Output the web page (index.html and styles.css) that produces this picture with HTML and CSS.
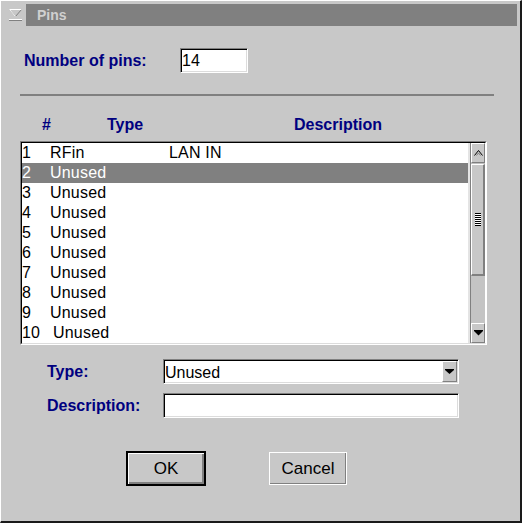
FILE: index.html
```html
<!DOCTYPE html>
<html>
<head>
<meta charset="utf-8">
<link rel="stylesheet" href="styles.css">
</head>
<body>
<div class="window">
  <div class="titlerow">
    <div class="menu-btn">
      <svg width="13" height="12" viewBox="0 0 13 12">
        <polygon points="0.5,0.5 12.5,0.5 6.5,7.5" fill="none" stroke="#808080" stroke-width="1"/>
        <polyline points="0.5,0.5 12.5,0.5" stroke="#ffffff" stroke-width="1" fill="none"/>
        <polyline points="0.5,0.5 6.5,7.5" stroke="#ffffff" stroke-width="1" fill="none"/>
        <rect x="0" y="10" width="13" height="1" fill="#ffffff"/>
        <rect x="0" y="11" width="13" height="1" fill="#808080"/>
      </svg>
    </div>
    <div class="titlebar">Pins</div>
  </div>

  <div class="content">
    <div class="num-row">
      <span class="label num-label">Number of pins:</span>
      <div class="textbox num-box">14</div>
    </div>

    <div class="separator"></div>

    <div class="headers">
      <span class="label">#</span>
      <span class="label">Type</span>
      <span class="label">Description</span>
    </div>

    <div class="listbox">
      <div class="listbox-inner">
        <div class="rows">
          <div class="row"><span class="num">1</span><span class="type">RFin</span><span class="desc">LAN IN</span></div>
          <div class="row selected"><span class="num">2</span><span class="type">Unused</span></div>
          <div class="row"><span class="num">3</span><span class="type">Unused</span></div>
          <div class="row"><span class="num">4</span><span class="type">Unused</span></div>
          <div class="row"><span class="num">5</span><span class="type">Unused</span></div>
          <div class="row"><span class="num">6</span><span class="type">Unused</span></div>
          <div class="row"><span class="num">7</span><span class="type">Unused</span></div>
          <div class="row"><span class="num">8</span><span class="type">Unused</span></div>
          <div class="row"><span class="num">9</span><span class="type">Unused</span></div>
          <div class="row"><span class="num wide">10</span><span class="type">Unused</span></div>
        </div>
        <div class="gutter"></div>
        <div class="scrollbar">
          <div class="sb-btn sb-up">
            <svg width="9" height="6" viewBox="0 0 9 6">
              <polyline points="0.5,5.5 4.5,0.5 8.5,5.5" fill="none" stroke="#000" stroke-width="1"/>
              <polyline points="2.5,5.5 4.5,3 6.5,5.5" fill="none" stroke="#808080" stroke-width="1"/>
            </svg>
          </div>
          <div class="sb-thumb"><div class="grip"></div></div>
          <div class="sb-trough"></div>
          <div class="sb-btn sb-down">
            <svg width="9" height="6" viewBox="0 0 9 6">
              <rect x="0" y="0" width="9" height="1" fill="#000"/>
              <polygon points="0,1 9,1 4.5,5.5" fill="#000"/>
            </svg>
          </div>
        </div>
      </div>
    </div>

    <div class="form-row type-row">
      <span class="label form-label">Type:</span>
      <div class="combo">
        <span class="combo-text">Unused</span>
        <div class="combo-btn">
          <svg width="9" height="5" viewBox="0 0 9 5">
            <rect x="0" y="0" width="9" height="1" fill="#000"/>
            <polygon points="0,1 9,1 4.5,5" fill="#000"/>
          </svg>
        </div>
      </div>
    </div>

    <div class="form-row desc-row">
      <span class="label form-label">Description:</span>
      <div class="textbox desc-box"></div>
    </div>

    <div class="buttons">
      <div class="btn btn-default">OK</div>
      <div class="btn btn-plain">Cancel</div>
    </div>
  </div>
</div>
</body>
</html>
```

FILE: styles.css
```css
html, body {
  margin: 0;
  padding: 0;
  background: #c8c8c8;
}

.window {
  width: 522px;
  height: 523px;
  box-sizing: border-box;
  background: #c8c8c8;
  border-top: 1px solid #ffffff;
  border-left: 1px solid #ffffff;
  border-right: 2px solid #1a1a1a;
  border-bottom: 2px solid #1a1a1a;
  font-family: "Liberation Sans", Arial, sans-serif;
  overflow: hidden;
}

/* title */
.titlerow {
  display: flex;
  height: 22px;
  margin-top: 3px;
}

.menu-btn {
  width: 25px;
  display: flex;
  align-items: center;
  padding-left: 8px;
  box-sizing: border-box;
}

.menu-btn svg {
  display: block;
}

.titlebar {
  flex: 1;
  margin-right: 3px;
  background: #808080;
  color: #d0d0d0;
  font-weight: bold;
  font-size: 14px;
  line-height: 22px;
  padding-left: 11px;
}

.content {
  padding-left: 19px;
}

.label {
  color: #000080;
  font-weight: bold;
  font-size: 16px;
  line-height: 18px;
}

/* number of pins */
.num-row {
  display: flex;
  align-items: center;
  margin-top: 22px;
  padding-left: 4px;
  height: 25px;
}

.num-label {
  width: 156px;
}

.textbox {
  box-sizing: border-box;
  height: 25px;
  background: #ffffff;
  border: 1px solid;
  border-color: #808080 #ffffff #ffffff #808080;
  box-shadow: inset 1px 1px 0 #000000, inset -1px -1px 0 #dcdcdc;
  font-size: 16px;
  line-height: 23px;
  padding-left: 1px;
  color: #000;
}

.num-box {
  width: 68px;
}

.desc-box {
  width: 296px;
}

.separator {
  margin-top: 21px;
  width: 474px;
  height: 2px;
  background: #808080;
}

/* headers */
.headers {
  margin-top: 20px;
  display: grid;
  grid-template-columns: 65px 187px auto;
  padding-left: 22px;
  height: 18px;
}

/* listbox */
.listbox {
  margin-top: 7px;
  width: 467px;
  height: 204px;
  box-sizing: border-box;
  border: 1px solid;
  border-color: #808080 #ffffff #ffffff #808080;
}

.listbox-inner {
  height: 202px;
  box-sizing: border-box;
  border: 1px solid;
  border-color: #000000 #ffffff #dcdcdc #000000;
  display: flex;
}

.rows {
  width: 446px;
  height: 200px;
  background: #ffffff;
  overflow: hidden;
}

.gutter {
  width: 2px;
  background: #e4e4e4;
}

.row {
  display: flex;
  height: 20px;
  line-height: 20px;
  font-size: 16px;
  color: #000;
  letter-spacing: 0.2px;
  white-space: nowrap;
}

.row.selected {
  background: #808080;
  color: #ffffff;
}

.num {
  width: 28px;
}

.num.wide {
  width: 31px;
}

.type {
  width: 119px;
}

/* scrollbar */
.scrollbar {
  width: 15px;
  box-sizing: border-box;
  border-left: 1px solid #808080;
  background: #c0c0c0;
  display: flex;
  flex-direction: column;
}

.sb-btn {
  height: 20px;
  box-sizing: border-box;
  background: #c8c8c8;
  border: 1px solid;
  border-color: #ffffff #808080 #808080 #ffffff;
  display: flex;
  align-items: center;
  justify-content: center;
}

.sb-btn svg {
  display: block;
}

.sb-up {
  margin-bottom: 1px;
}

.sb-thumb {
  height: 112px;
  box-sizing: border-box;
  background: #c8c8c8;
  border-top: 1px solid #ffffff;
  border-left: 1px solid #ffffff;
  border-right: 2px solid #808080;
  border-bottom: 2px solid #808080;
  display: flex;
  align-items: center;
  justify-content: center;
}

.grip {
  width: 6px;
  height: 13px;
  background: repeating-linear-gradient(to bottom, #000000 0 1px, #ffffff 1px 2px);
}

.sb-trough {
  height: 47px;
  background: #c4c4c4;
}

/* form rows */
.form-row {
  display: flex;
  align-items: center;
  padding-left: 27px;
  height: 25px;
}

.type-row {
  margin-top: 14px;
}

.desc-row {
  margin-top: 9px;
}

.form-label {
  width: 116px;
}

.combo {
  width: 296px;
  height: 25px;
  box-sizing: border-box;
  background: #ffffff;
  border: 1px solid;
  border-color: #808080 #ffffff #ffffff #808080;
  box-shadow: inset 1px 1px 0 #000000, inset -1px -1px 0 #dcdcdc;
  display: flex;
  align-items: stretch;
  padding: 1px;
}

.combo-text {
  flex: 1;
  font-size: 16px;
  line-height: 21px;
  color: #000;
  padding-top: 1px;
}

.combo-btn {
  width: 15px;
  box-sizing: border-box;
  background: #c8c8c8;
  border: 1px solid;
  border-color: #ffffff #808080 #808080 #ffffff;
  display: flex;
  align-items: center;
  justify-content: center;
}

.combo-btn svg {
  display: block;
}

/* buttons */
.buttons {
  display: flex;
  align-items: center;
  margin-top: 33px;
  padding-left: 106px;
}

.btn {
  box-sizing: border-box;
  background: #c8c8c8;
  color: #000;
  font-size: 17px;
  text-align: center;
  display: flex;
  align-items: center;
  justify-content: center;
}

.btn-default {
  width: 80px;
  height: 35px;
  border: 2px solid #000000;
  box-shadow: inset 1px 1px 0 #ffffff, inset -2px -2px 0 #808080;
}

.btn-plain {
  width: 78px;
  height: 33px;
  margin-left: 63px;
  border: 1px solid #ffffff;
  box-shadow: inset -1px -1px 0 #808080;
}
```
